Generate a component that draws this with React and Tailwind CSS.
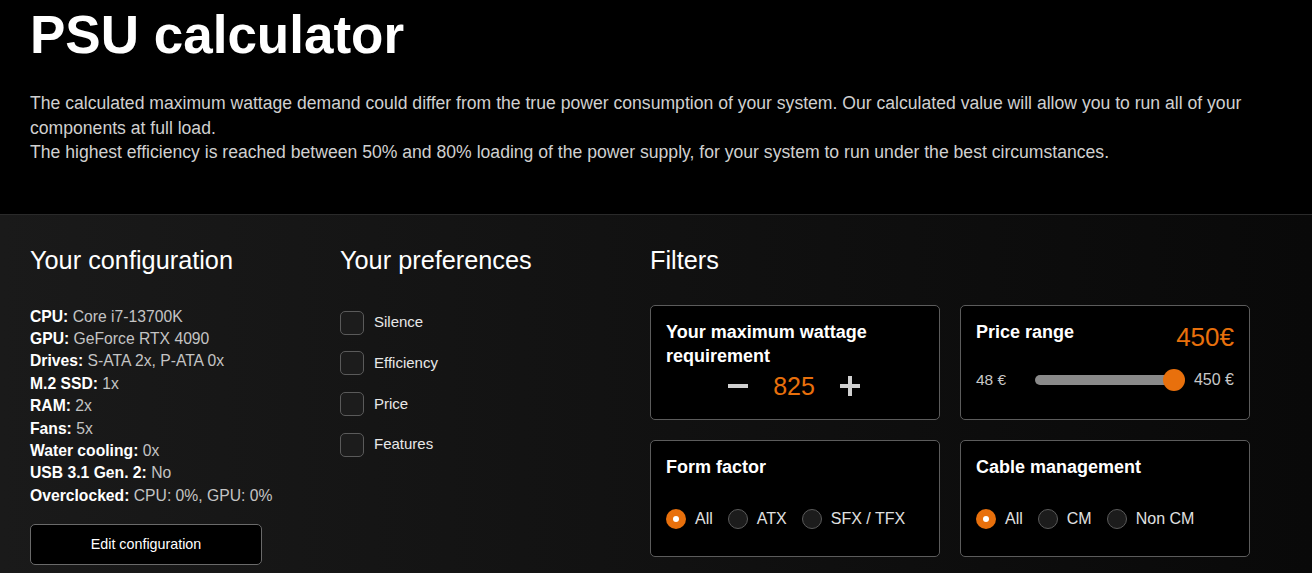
import React from "react";

const font = { fontFamily: '"Liberation Sans", Arial, sans-serif' };

function Row({ k, v }) {
  return (
    <div className="leading-[22.4px]">
      <span className="font-bold text-white">{k}</span>{" "}
      <span className="text-[#c4c4c4]">{v}</span>
    </div>
  );
}

function Check({ label }) {
  return (
    <div className="flex items-center gap-[10px] h-[24px]">
      <div className="w-[24px] h-[24px] rounded-[5px] border border-[#5a5a5a] bg-[#1c1c1c]" />
      <span className="text-[15px] text-[#e8e8e8]">{label}</span>
    </div>
  );
}

function Radio({ label, on }) {
  return (
    <div className="flex items-center gap-[9px] mr-[5px]">
      {on ? (
        <div className="w-[20px] h-[20px] rounded-full bg-[#e8700c] flex items-center justify-center">
          <div className="w-[6px] h-[6px] rounded-full bg-white" />
        </div>
      ) : (
        <div className="w-[20px] h-[20px] rounded-full border border-[#5a5a5a] bg-[#1c1c1c]" />
      )}
      <span className="text-[16px] text-[#e0e0e0]">{label}</span>
    </div>
  );
}

function Card({ children, className = "" }) {
  return (
    <div className={"rounded-[5px] border border-[#5c5c5c] bg-black px-[15px] " + className}>
      {children}
    </div>
  );
}

export default function App() {
  return (
    <div style={font} className="w-[1312px] min-h-[573px] bg-black text-white">
      <header className="bg-black px-[30px] pb-[49px] border-b border-[#2a2a2a]">
        <h1 className="text-[53px] leading-[60px] font-bold pt-[5px]">PSU calculator</h1>
        <div className="mt-[26px] text-[17.6px] leading-[24.5px] text-[#d0d0d0] w-[1252px]">
          <p>
            The calculated maximum wattage demand could differ from the true power consumption of your system. Our calculated value will allow you to run all of your components at full load.
          </p>
          <p>
            The highest efficiency is reached between 50% and 80% loading of the power supply, for your system to run under the best circumstances.
          </p>
        </div>
      </header>
      <section className="bg-gradient-to-r from-[#1a1a1a] to-[#090909] px-[30px] pt-[29px] pb-[30px] flex">
        <div className="w-[310px]">
          <h2 className="text-[25.3px] leading-[32px] font-light text-white">Your configuration</h2>
          <div className="mt-[30px] text-[15.7px]">
            <Row k="CPU:" v="Core i7-13700K" />
            <Row k="GPU:" v="GeForce RTX 4090" />
            <Row k="Drives:" v="S-ATA 2x, P-ATA 0x" />
            <Row k="M.2 SSD:" v="1x" />
            <Row k="RAM:" v="2x" />
            <Row k="Fans:" v="5x" />
            <Row k="Water cooling:" v="0x" />
            <Row k="USB 3.1 Gen. 2:" v="No" />
            <Row k="Overclocked:" v="CPU: 0%, GPU: 0%" />
          </div>
          <button className="mt-[17px] w-[232px] h-[41px] rounded-[5px] border border-[#6a6a6a] bg-black text-[14.3px] text-white">
            Edit configuration
          </button>
        </div>
        <div className="w-[310px]">
          <h2 className="text-[25.3px] leading-[32px] font-light text-white">Your preferences</h2>
          <div className="mt-[35px] flex flex-col gap-[16.7px]">
            <Check label="Silence" />
            <Check label="Efficiency" />
            <Check label="Price" />
            <Check label="Features" />
          </div>
        </div>
        <div className="w-[600px]">
          <h2 className="text-[25.3px] leading-[32px] font-light text-white">Filters</h2>
          <div className="mt-[29px] grid grid-cols-[290px_290px] gap-[20px]">
            <Card className="h-[115px] pt-[14px]">
              <div className="text-[18px] leading-[24px] font-bold text-white">
                Your maximum wattage<br />requirement
              </div>
              <div className="flex items-center justify-center gap-[25px] mt-[3px] pr-[2px]">
                <svg width="20" height="20" viewBox="0 0 20 20"><rect x="0" y="8" width="20" height="4" fill="#d0d0d0" /></svg>
                <span className="text-[25px] leading-[30px] text-[#e8700c]">825</span>
                <svg width="20" height="20" viewBox="0 0 20 20"><rect x="0" y="8" width="20" height="4" fill="#d0d0d0" /><rect x="8" y="0" width="4" height="20" fill="#d0d0d0" /></svg>
              </div>
            </Card>
            <Card className="h-[115px] pt-[14px]">
              <div className="flex justify-between items-start">
                <div className="text-[18px] leading-[24px] font-bold text-white">Price range</div>
                <div className="text-[26px] leading-[28px] text-[#e8700c] mt-[3px]">450€</div>
              </div>
              <div className="flex items-center mt-[17px]">
                <span className="text-[15.5px] text-[#c8c8c8] w-[59px]">48 €</span>
                <div className="relative w-[145px] h-[10px] rounded-full bg-[#8a8a8a]">
                  <div className="absolute right-[-5px] top-[-6px] w-[22px] h-[22px] rounded-full bg-[#e8700c]" />
                </div>
                <span className="ml-auto text-[16px] text-[#c8c8c8]">450 €</span>
              </div>
            </Card>
            <Card className="h-[117px] pt-[14px]">
              <div className="text-[18px] leading-[24px] font-bold text-white">Form factor</div>
              <div className="flex items-center mt-[28px] gap-[10px]">
                <Radio label="All" on />
                <Radio label="ATX" />
                <Radio label="SFX / TFX" />
              </div>
            </Card>
            <Card className="h-[117px] pt-[14px]">
              <div className="text-[18px] leading-[24px] font-bold text-white">Cable management</div>
              <div className="flex items-center mt-[28px] gap-[10px]">
                <Radio label="All" on />
                <Radio label="CM" />
                <Radio label="Non CM" />
              </div>
            </Card>
          </div>
        </div>
      </section>
    </div>
  );
}
